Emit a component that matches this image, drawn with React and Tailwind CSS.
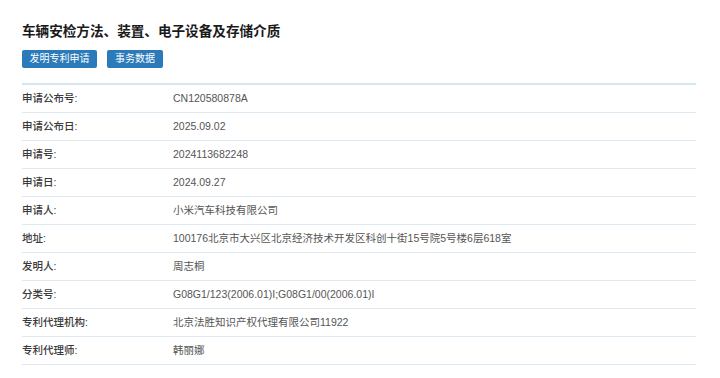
import React from 'react';

const rows = [
  ['申请公布号:', 'CN120580878A'],
  ['申请公布日:', '2025.09.02'],
  ['申请号:', '2024113682248'],
  ['申请日:', '2024.09.27'],
  ['申请人:', '小米汽车科技有限公司'],
  ['地址:', '100176北京市大兴区北京经济技术开发区科创十街15号院5号楼6层618室'],
  ['发明人:', '周志桐'],
  ['分类号:', 'G08G1/123(2006.01)I;G08G1/00(2006.01)I'],
  ['专利代理机构:', '北京法胜知识产权代理有限公司11922'],
  ['专利代理师:', '韩丽娜'],
];

function App() {
  return (
    <div
      className="bg-white w-[720px] h-[378px] pl-[22px] pr-[24px] pt-[22px]"
      style={{ fontFamily: '"Liberation Sans", "Noto Sans CJK SC", sans-serif' }}
    >
      <h1 className="text-[13.6px] leading-[20px] font-bold text-[#1a1a1a]">
        车辆安检方法、装置、电子设备及存储介质
      </h1>
      <div className="flex gap-[10px] mt-[8px]">
        <button className="h-[18px] w-[75px] rounded-[2px] bg-[#2b7bba] text-white text-[10px] leading-[18px]">
          发明专利申请
        </button>
        <button className="h-[18px] w-[56px] rounded-[2px] bg-[#2b7bba] text-white text-[10px] leading-[18px]">
          事务数据
        </button>
      </div>
      <div className="mt-[15px] border-t-2 border-[#d6e6f1]">
        {rows.map(([label, value]) => (
          <div
            key={label}
            className="flex items-center h-[28px] border-b border-[#dce9f3] text-[10.5px]"
          >
            <div className="w-[151px] shrink-0 text-[#3a3a3a] font-medium">{label}</div>
            <div className="text-[#555]">{value}</div>
          </div>
        ))}
      </div>
    </div>
  );
}

export default App;
